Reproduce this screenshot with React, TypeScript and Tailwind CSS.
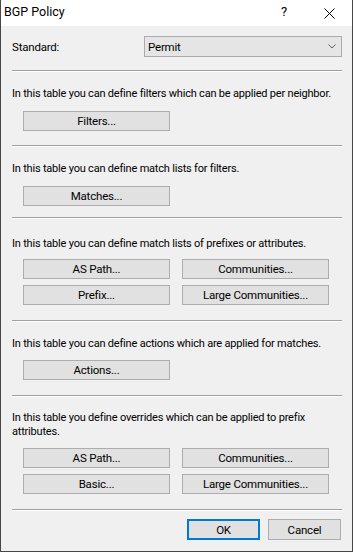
import React from 'react';

function Separator({ className = '' }: { className?: string }) {
  return <div className={`h-[2px] border-t border-[#a0a0a0] border-b border-b-white ${className}`}></div>;
}

function DlgButton({ label, className = '' }: { label: string; className?: string }) {
  return (
    <button
      type="button"
      className={`h-[20px] w-[147px] bg-[#e1e1e1] border border-[#adadad] text-[11.5px] tracking-[-0.2px] leading-[14px] text-black ${className}`}
    >
      {label}
    </button>
  );
}

export default function App() {
  return (
    <div className="w-[353px] h-[552px] flex flex-col bg-[#f0f0f0] border-x border-b border-[#474747] font-[Roboto,sans-serif] text-black select-none overflow-hidden">
      {/* title bar */}
      <div className="h-[26px] bg-white flex items-start shrink-0">
        <div className="flex-1 pl-[3px] pt-[4px] text-[12.5px] leading-[16px]">BGP Policy</div>
        <div className="w-[44px] pt-[4px] text-center text-[13px] leading-[16px]">?</div>
        <div className="w-[46px] h-[26px] flex items-center justify-center">
          <svg width="11" height="11" viewBox="0 0 11 11">
            <path d="M0.5 0.5 L10.5 10.5 M10.5 0.5 L0.5 10.5" stroke="#000" strokeWidth="1" />
          </svg>
        </div>
      </div>

      <div className="flex-1 flex flex-col pl-[11px] pr-[10px] text-[11px] tracking-[-0.2px] leading-[14px]">
        <div className="mt-[10px] h-[21px] flex items-center">
          <span className="text-[11.5px]">Standard:</span>
          <div className="ml-auto w-[198px] h-[21px] bg-[#e5e5e5] border border-[#acacac] flex items-center pl-[3px] pr-[5px] text-[11.5px]">
            <span className="flex-1">Permit</span>
            <svg width="8" height="5" viewBox="0 0 8 5">
              <polyline points="0.5,0.5 4,4 7.5,0.5" fill="none" stroke="#606060" strokeWidth="1" />
            </svg>
          </div>
        </div>

        <Separator className="mt-[13px]" />
        <p className="mt-[15px]">In this table you can define filters which can be applied per neighbor.</p>
        <DlgButton label="Filters..." className="mt-[10px] ml-[11px]" />

        <Separator className="mt-[14px]" />
        <p className="mt-[15px]">In this table you can define match lists for filters.</p>
        <DlgButton label="Matches..." className="mt-[10px] ml-[11px]" />

        <Separator className="mt-[11px]" />
        <p className="mt-[18px]">In this table you can define match lists of prefixes or attributes.</p>
        <div className="mt-[8px] ml-[11px] grid grid-cols-[147px_147px] gap-x-[12px] gap-y-[6px]">
          <DlgButton label="AS Path..." />
          <DlgButton label="Communities..." />
          <DlgButton label="Prefix..." />
          <DlgButton label="Large Communities..." />
        </div>

        <Separator className="mt-[15px]" />
        <p className="mt-[15px]">In this table you can define actions which are applied for matches.</p>
        <DlgButton label="Actions..." className="mt-[9px] ml-[11px]" />

        <Separator className="mt-[15px]" />
        <p className="mt-[14px] pr-[20px]">In this table you define overrides which can be applied to prefix attributes.</p>
        <div className="mt-[9px] ml-[11px] grid grid-cols-[147px_147px] gap-x-[12px] gap-y-[6px]">
          <DlgButton label="AS Path..." />
          <DlgButton label="Communities..." />
          <DlgButton label="Basic..." />
          <DlgButton label="Large Communities..." />
        </div>

        <Separator className="mt-[15px]" />
        <div className="mt-[8px] flex justify-end gap-[8px] pr-[1px]">
          <button type="button" className="w-[73px] h-[21px] bg-[#e1e1e1] border-2 border-[#0078d7] text-[11.5px] leading-[14px]">OK</button>
          <button type="button" className="w-[73px] h-[21px] bg-[#e1e1e1] border border-[#adadad] text-[11.5px] leading-[14px]">Cancel</button>
        </div>
      </div>
    </div>
  );
}
